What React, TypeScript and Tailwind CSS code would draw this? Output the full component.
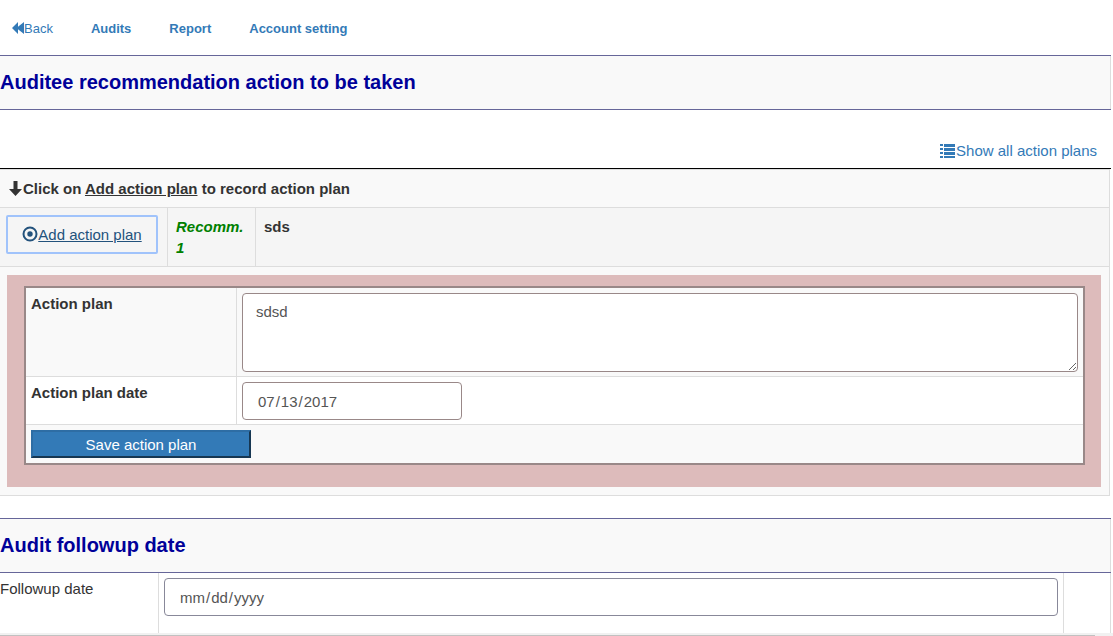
import type { ReactNode } from "react";

function BackwardIcon() {
  return (
    <svg width="12" height="12" viewBox="0 0 12 12" fill="currentColor" aria-hidden="true">
      <path d="M0 6 6 0V4.800L12 0v12L6 7.200V12Z" />
    </svg>
  );
}

function ListIcon() {
  return (
    <svg width="16" height="14" viewBox="0 0 16 14" fill="currentColor" shapeRendering="crispEdges" aria-hidden="true">
      <path d="M0 0h3v2H0zM4 0h11v3H4zM0 4h3v2H0zM4 4h11v3H4zM0 8h3v2H0zM4 8h11v3H4zM0 12h3v2H0zM4 12h11v2H4z" />
    </svg>
  );
}

function ArrowDownIcon() {
  return (
    <svg width="15" height="16" viewBox="0 0 15 16" fill="currentColor" aria-hidden="true">
      <path d="M5.500 0h4v8H14L7.500 15 1 8h4.500z" />
    </svg>
  );
}

function RecordIcon() {
  return (
    <svg width="16" height="18" viewBox="0 0 16 18" aria-hidden="true">
      <circle cx="8" cy="8" r="6.500" fill="none" stroke="currentColor" strokeWidth="2" />
      <circle cx="8" cy="8" r="2.700" fill="currentColor" />
    </svg>
  );
}

function SectionTitle({ children }: { children: ReactNode }) {
  return (
    <h2 className="border-y border-[#666699] bg-[#f9f9f9]">
      <span className="block border-r border-[#dddddd] py-3 text-xl leading-[29px] font-bold text-[#000099]">
        {children}
      </span>
    </h2>
  );
}

const dateInput =
  "block h-[38px] rounded border bg-white px-3.5 text-[15px] text-[#555555] [&::-webkit-calendar-picker-indicator]:hidden";

export default function App() {
  return (
    <div className="flex min-h-screen flex-col bg-white font-['Liberation_Sans',Arial,sans-serif] text-[15px] leading-[21px] text-[#333333]">
      <div className="grow pr-0.5">
        <nav className="flex h-[55px] items-center gap-[38px] pt-px pl-3 text-[13px] font-bold text-[#337ab7]">
          <a href="#back" className="flex items-center font-normal">
            <BackwardIcon />
            Back
          </a>
          <a href="#audits">Audits</a>
          <a href="#report">Report</a>
          <a href="#account">Account setting</a>
        </nav>

        <SectionTitle>Auditee recommendation action to be taken</SectionTitle>

        <div className="flex justify-end pt-[30px] pr-3.5 pb-[7px]">
          <a href="#plans" className="flex items-center text-[#337ab7]">
            <ListIcon />
            Show all action plans
          </a>
        </div>

        <section className="border-t border-black">
          <div className="mr-px border-y border-r border-[#dddddd] bg-[#f9f9f9]">
            <p className="flex items-center py-2 pl-2 font-bold">
              <ArrowDownIcon />
              <span>
                Click on <span className="underline">Add action plan</span> to record action plan
              </span>
            </p>

            <div className="flex border-y border-[#dddddd] bg-[#f5f5f5] font-bold">
              <div className="w-[168px] border-r border-[#dddddd] py-[7px] pl-1.5">
                <a
                  href="#add"
                  className="flex h-[39px] w-[152px] items-center justify-center rounded-xs border-2 border-[#a0c3fb] font-normal text-[#23527c]"
                >
                  <RecordIcon />
                  <span className="underline">Add action plan</span>
                </a>
              </div>
              <div className="w-[88px] border-r border-[#dddddd] p-2 text-[#008000] italic">Recomm. 1</div>
              <div className="grow p-2">sds</div>
            </div>

            <div className="p-2 pl-[7px]">
              <form className="bg-[#ddbbbb] pt-[11px] pr-4 pb-[22px] pl-[17px]">
                <div className="border-2 border-[#998888] bg-white">
                  <div className="flex border-b border-[#dddddd] bg-[#f9f9f9]">
                    <div className="w-[211px] border-r border-[#dddddd] p-[5px]">
                      <label htmlFor="plan" className="font-bold">
                        Action plan
                      </label>
                    </div>
                    <div className="grow p-[5px] pb-1">
                      <textarea
                        id="plan"
                        defaultValue="sdsd"
                        className="block h-[79px] w-full rounded border border-[#998888] bg-white px-[13px] py-[7px] text-[#555555]"
                      />
                    </div>
                  </div>
                  <div className="flex border-b border-[#dddddd]">
                    <div className="w-[211px] border-r border-[#dddddd] p-[5px]">
                      <label htmlFor="plan-date" className="font-bold">
                        Action plan date
                      </label>
                    </div>
                    <div className="p-[5px] pb-1">
                      <input
                        id="plan-date"
                        type="date"
                        defaultValue="2017-07-13"
                        className={`${dateInput} w-[220px] border-[#998888]`}
                      />
                    </div>
                  </div>
                  <div className="bg-[#f9f9f9] p-[5px]">
                    <button
                      type="button"
                      className="block h-7 w-[220px] border-2 border-t-[#2e6da4] border-r-[#173752] border-b-[#173752] border-l-[#2e6da4] bg-[#337ab7] text-white"
                    >
                      Save action plan
                    </button>
                  </div>
                </div>
              </form>
            </div>
          </div>
        </section>

        <section className="pt-[22px]">
          <SectionTitle>Audit followup date</SectionTitle>
          <div className="flex h-[60px] border-r border-[#dddddd]">
            <div className="w-[159px] border-r border-[#dddddd] py-[5px]">
              <label htmlFor="followup">Followup date</label>
            </div>
            <div className="grow border-r border-[#dddddd] p-[5px]">
              <input id="followup" type="date" className={`${dateInput} w-full border-[#888899]`} />
            </div>
            <div className="w-[46px]" />
          </div>
        </section>
      </div>

      <div className="bg-[#f1f1f1] pt-0.5 pr-[18px]">
        <div className="h-px bg-[#c1c1c1]" />
      </div>
    </div>
  );
}
